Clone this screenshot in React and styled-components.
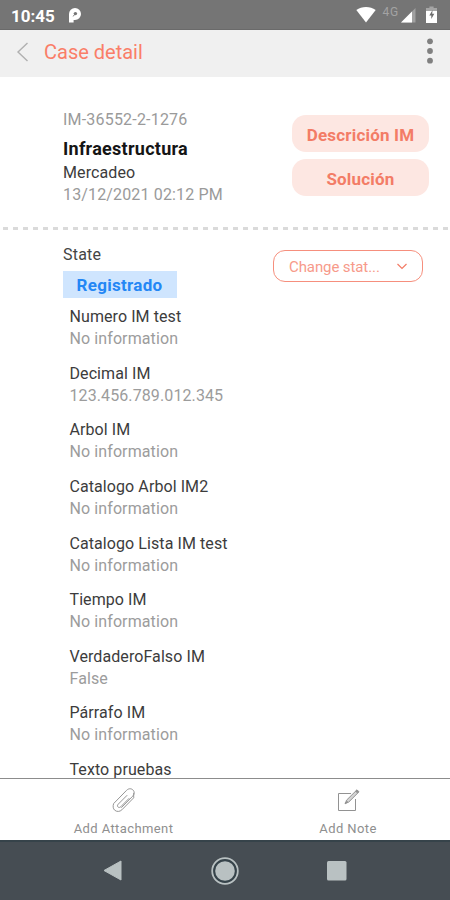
import React from 'react';
import styled, { createGlobalStyle } from 'styled-components';

const GlobalStyle = createGlobalStyle`
  * {
    box-sizing: border-box;
  }

  body {
    margin: 0;
    background: #ffffff;
    font-family: Roboto, sans-serif;
  }
`;

const Screen = styled.div`
  display: flex;
  flex-direction: column;
  width: 450px;
  height: 900px;
  overflow: hidden;
  background: #ffffff;
`;

const StatusBar = styled.div`
  display: flex;
  justify-content: space-between;
  height: 30px;
  padding: 0 13px 0 11px;
  background: #757575;
  border-bottom: 1px solid #6a6a6a;
  color: #ffffff;
`;

const StatusGroup = styled.div`
  display: flex;
  align-items: center;
`;

const Clock = styled.span`
  width: 57px;
  padding-top: 2px;
  font-size: 17px;
  font-weight: 700;
`;

const Network = styled.span`
  align-self: flex-start;
  margin: 5px 2px 0 6px;
  color: #a3a3a3;
  font-size: 12px;
  line-height: 15px;
  letter-spacing: 0.8px;
`;

const Header = styled.header`
  display: flex;
  align-items: center;
  flex: none;
  height: 47px;
  padding: 0 15px 4px 16px;
  background: #f0f0f0;
`;

const Title = styled.h1`
  flex: 1;
  margin: 0 0 0 15px;
  color: #fa7e68;
  font-size: 20px;
  font-weight: 400;
`;

const Summary = styled.section`
  display: flex;
  justify-content: space-between;
  flex: none;
  height: 150px;
  padding: 30px 21px 0 63px;
`;

const SummaryText = styled.div`
  color: ${(props) => props.$color || '#9a9a9a'};
  font-size: ${(props) => props.$size || 16}px;
  font-weight: ${(props) => props.$weight || 400};
  line-height: ${(props) => props.$line || 22}px;
  letter-spacing: ${(props) => props.$spacing || 0}px;
  white-space: nowrap;
`;

const Actions = styled.div`
  display: flex;
  flex-direction: column;
  gap: 7px;
  padding-top: 8px;
`;

const ActionButton = styled.button`
  width: 137px;
  height: 37px;
  padding: 2px 0 0;
  border: none;
  border-radius: 14px;
  background: #fde7e2;
  color: #f37c66;
  font-family: inherit;
  font-size: 17px;
  font-weight: 700;
  letter-spacing: 0.2px;
`;

const Divider = styled.div`
  flex: none;
  height: 3px;
  margin: 0 0 1px 3px;
  background: repeating-linear-gradient(to right, #dadada 0 5px, transparent 5px 10px);
`;

const StateRow = styled.section`
  display: flex;
  justify-content: space-between;
  flex: none;
  height: 75px;
  padding: 13px 27px 0 63px;
`;

const StateLabel = styled.div`
  color: #444444;
  font-size: 16px;
  line-height: 22px;
  letter-spacing: 0.2px;
`;

const StateBadge = styled.div`
  width: 114px;
  height: 27px;
  margin-top: 5px;
  padding-right: 1px;
  background: #cfe5fe;
  color: #2487f5;
  font-size: 17px;
  font-weight: 700;
  line-height: 29px;
  letter-spacing: 0.3px;
  text-align: center;
`;

const StateSelect = styled.button`
  display: flex;
  align-items: center;
  justify-content: space-between;
  width: 150px;
  height: 32px;
  margin-top: 6px;
  padding: 1px 14px 0 15px;
  border: 1px solid #f68f7d;
  border-radius: 12px;
  background: #ffffff;
  color: #f79a8a;
  font-family: inherit;
  font-size: 15px;
  letter-spacing: -0.1px;
`;

const Fields = styled.dl`
  flex: 1;
  min-height: 0;
  margin: 0;
  padding-left: 69.5px;
  overflow: hidden;
`;

const Field = styled.div`
  height: 56.65px;
`;

const FieldName = styled.dt`
  color: #3c3c3c;
  font-size: 16px;
  line-height: 22px;
  letter-spacing: 0.08px;
`;

const FieldValue = styled.dd`
  margin: 0;
  color: #9c9c9c;
  font-size: 16px;
  line-height: 22px;
  letter-spacing: 0.1px;
`;

const BottomActions = styled.div`
  display: flex;
  justify-content: space-between;
  flex: none;
  height: 62px;
  padding: 9px 39px 0;
  border-top: 1px solid #8c8c8c;
  background: #ffffff;
`;

const BottomAction = styled.div`
  display: flex;
  flex-direction: column;
  align-items: center;
  width: ${(props) => props.$width}px;
  color: #8f8f8f;
  font-size: 13px;
  line-height: 18px;
  letter-spacing: 0.4px;
  white-space: nowrap;

  svg {
    margin-bottom: 7px;
  }
`;

const NavBar = styled.nav`
  display: flex;
  align-items: center;
  justify-content: space-between;
  flex: none;
  height: 60px;
  padding: 0 103px;
  border-top: 2px solid #36434a;
  background: #464d53;
`;

const fields = [
  { name: 'Numero IM test', value: 'No information' },
  { name: 'Decimal IM', value: '123.456.789.012.345' },
  { name: 'Arbol IM', value: 'No information' },
  { name: 'Catalogo Arbol IM2', value: 'No information' },
  { name: 'Catalogo Lista IM test', value: 'No information' },
  { name: 'Tiempo IM', value: 'No information' },
  { name: 'VerdaderoFalso IM', value: 'False' },
  { name: 'Párrafo IM', value: 'No information' },
  { name: 'Texto pruebas' }
];

function PayIcon() {
  return (
    <svg width="14" height="16" viewBox="0 0 14 16">
      <path
        d="M1 7A6 6 0 0 1 7 1a6 6 0 0 1 0 12H5.6v2.500H1z"
        fill="#fff"
      />
      <circle cx="7.4" cy="6.6" r="1.7" fill="#757575" />
      <path d="M5.2 9.400l1.400-2" stroke="#757575" strokeWidth="1" />
    </svg>
  );
}

function StatusIcons() {
  return (
    <StatusGroup>
      <svg width="20" height="16" viewBox="0 0 20 16">
        <path d="M0.3 3.1C5.8-.9 14.2-.9 19.7 3.1L10 15.5z" fill="#fff" />
      </svg>
      <Network>4G</Network>
      <svg width="15" height="16" viewBox="0 0 15 16">
        <path d="M14.5 1v14.5H0z" fill="#a0a0a0" />
        <path d="M11 4.6v10.9H0z" fill="#fff" />
      </svg>
      <svg width="11" height="17" viewBox="0 0 11 17" style={{ marginLeft: 10 }}>
        <path d="M3.4.5h4.2V2H11v15H0V2h3.4z" fill="#a5a5a5" />
        <path d="M0 5h11v12H0z" fill="#fff" />
        <path d="M6.6 4L3.3 9.6h2V13l3-5.2H6.2z" fill="#6e6e6e" />
      </svg>
    </StatusGroup>
  );
}

function PaperclipIcon() {
  return (
    <svg width="24" height="25" viewBox="0 0 24 25" fill="none" stroke="#969696" strokeWidth="1">
      <path d="M1.7 15.5L14.5 2.4c2.2-2.3 5.2-2 6.7-.2 1.5 1.7 1.3 4.2-.5 6L9.3 19.7" />
      <path d="M1.7 15.5c-1 2.5-.7 5.2 1 6.7 2 1.8 5.2 1.6 7.2-.4L21.7 9.8V5" />
      <path d="M15.2 7.2l-9 9c-1 1.2-.9 2.2-.2 2.8.8.7 1.9.6 2.8-.3l8.4-8.5" />
    </svg>
  );
}

function NoteIcon() {
  return (
    <svg width="23" height="25" viewBox="0 0 23 25" fill="none" stroke="#929292">
      <path d="M14 5.5H1.5v17h17V11" />
      <path d="M8.5 15.3l1-3.1L20 1.8l2 2L11.6 14.2z" fill="#d5d5d5" />
      <path d="M19 2.5l2 2" strokeWidth="2.4" />
      <path d="M8 15.800l2.500-2.500" strokeWidth="1.6" />
    </svg>
  );
}

function App() {
  return (
    <>
      <GlobalStyle />
      <Screen>
        <StatusBar>
          <StatusGroup>
            <Clock>10:45</Clock>
            <PayIcon />
          </StatusGroup>
          <StatusIcons />
        </StatusBar>

        <Header>
          <svg width="13" height="20" viewBox="0 0 13 20" fill="none" stroke="#b0b0b0" strokeWidth="1.4">
            <path d="M11.5 1L2 10l9.5 9" />
          </svg>
          <Title>Case detail</Title>
          <svg width="10" height="28" viewBox="0 0 10 28" fill="#808080">
            <circle cx="5" cy="3.3" r="2.9" />
            <circle cx="5" cy="13" r="2.9" />
            <circle cx="5" cy="22.7" r="2.9" />
          </svg>
        </Header>

        <Summary>
          <div>
            <SummaryText $line={26} $spacing={0.2}>IM-36552-2-1276</SummaryText>
            <SummaryText $color="#151515" $size={18} $weight={700} $line={32} $spacing={0.27}>
              Infraestructura
            </SummaryText>
            <SummaryText $color="#3c3c3c" $line={15} $spacing={0.1}>Mercadeo</SummaryText>
            <SummaryText $line={29} $spacing={0.15}>13/12/2021 02:12 PM</SummaryText>
          </div>
          <Actions>
            <ActionButton>Descrición IM</ActionButton>
            <ActionButton>Solución</ActionButton>
          </Actions>
        </Summary>

        <Divider />

        <StateRow>
          <div>
            <StateLabel>State</StateLabel>
            <StateBadge>Registrado</StateBadge>
          </div>
          <StateSelect>
            Change stat...
            <svg width="12" height="8" viewBox="0 0 12 8" fill="none" stroke="#f37c66" strokeWidth="1.2">
              <path d="M1.5 1L6 5.5 10.5 1" />
            </svg>
          </StateSelect>
        </StateRow>

        <Fields>
          {fields.map((field) => (
            <Field key={field.name}>
              <FieldName>{field.name}</FieldName>
              {field.value && <FieldValue>{field.value}</FieldValue>}
            </Field>
          ))}
        </Fields>

        <BottomActions>
          <BottomAction $width={169}>
            <PaperclipIcon />
            Add Attachment
          </BottomAction>
          <BottomAction $width={126}>
            <NoteIcon />
            Add Note
          </BottomAction>
        </BottomActions>

        <NavBar>
          <svg width="20" height="22" viewBox="0 0 20 22">
            <path d="M1 10.5L18 1v19z" fill="#b9c1c2" stroke="#b9c1c2" strokeLinejoin="round" />
          </svg>
          <svg width="28" height="28" viewBox="0 0 28 28">
            <circle cx="14" cy="14" r="12.8" fill="#36434a" stroke="#b9c1c2" strokeWidth="1.8" />
            <circle cx="14" cy="14" r="9.8" fill="#b9c1c2" />
          </svg>
          <svg width="20" height="20" viewBox="0 0 20 20">
            <rect width="19.5" height="19.5" rx="1.5" fill="#b9c1c2" />
          </svg>
        </NavBar>
      </Screen>
    </>
  );
}

export default App;
